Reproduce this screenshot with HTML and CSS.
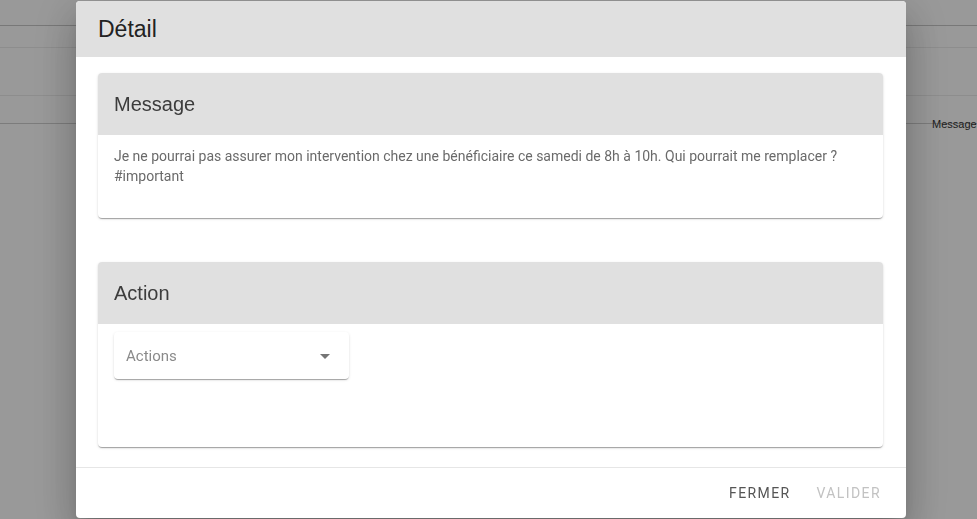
FILE: index.html
```html
<!DOCTYPE html>
<html>
  <head>
    <title>Messages</title>
    <link rel="stylesheet" href="styles.css">
  </head>
  <body>
    <!-- Page behind the dialog -->
    <div class="page">
      <div class="page-bar"></div>
      <div class="page-tabs"></div>
      <div class="page-filters"></div>
      <div class="page-head">
        <span class="page-col">Message</span>
      </div>
    </div>

    <!-- Detail dialog -->
    <div class="backdrop">
      <div class="dialog">
        <div class="dialog-title">Détail</div>
        <div class="dialog-content">
          <div class="card">
            <div class="card-header">Message</div>
            <div class="card-body">
              <p class="message-text">Je ne pourrai pas assurer mon intervention chez une bénéficiaire ce samedi de 8h à 10h. Qui pourrait me remplacer ? #important</p>
            </div>
          </div>

          <div class="card card-action">
            <div class="card-header">Action</div>
            <div class="card-body">
              <div class="select">
                <span class="select-label">Actions</span>
                <svg class="select-icon" viewBox="0 0 24 24" width="24" height="24"><path d="M7 10l5 5 5-5z"></path></svg>
              </div>
            </div>
          </div>
        </div>
        <div class="dialog-actions">
          <button class="btn">Fermer</button>
          <button class="btn" disabled>Valider</button>
        </div>
      </div>
    </div>
  </body>
</html>
```

FILE: styles.css
```css
body {
  margin: 0;
  height: 100vh;
  overflow: hidden;
  font-family: Roboto, "Liberation Sans", Arial, sans-serif;
  background-color: #fff;
}

.page-bar {
  height: 25px;
  border-bottom: 1px solid #c8c8c8;
}

.page-tabs {
  height: 21px;
  border-bottom: 1px solid #ececec;
}

.page-filters {
  height: 47px;
  border-bottom: 1px solid #ececec;
}

.page-head {
  height: 27px;
  border-bottom: 1px solid #cfcfcf;
  display: flex;
  justify-content: flex-end;
  align-items: flex-end;
}

.page-col {
  font-family: "Liberation Sans", Arial, sans-serif;
  font-size: 11px;
  color: #333;
  width: 45px;
  white-space: nowrap;
  overflow: hidden;
  margin-bottom: -7px;
}

.backdrop {
  position: fixed;
  inset: 0;
  background: rgba(0, 0, 0, 0.4);
  display: flex;
  justify-content: center;
  align-items: flex-start;
}

.dialog {
  width: 830px;
  height: 517px;
  margin: 1px 0 0 5px;
  background: #fff;
  border-radius: 4px;
  overflow: hidden;
  display: flex;
  flex-direction: column;
  box-shadow: 0 11px 15px -7px rgba(0, 0, 0, 0.2), 0 24px 38px 3px rgba(0, 0, 0, 0.14), 0 9px 46px 8px rgba(0, 0, 0, 0.12);
}

.dialog-title {
  flex-shrink: 0;
  background: #e0e0e0;
  height: 56px;
  padding: 0 22px;
  display: flex;
  align-items: center;
  font-family: "Liberation Sans", Arial, sans-serif;
  font-size: 23px;
  color: #222;
}

.dialog-content {
  flex: 1;
  padding: 16px 23px 0 22px;
  display: flex;
  flex-direction: column;
  gap: 44px;
}

.card {
  flex-shrink: 0;
  border-radius: 4px;
  background: #fff;
  overflow: hidden;
  box-shadow: 0 2px 1px -1px rgba(0, 0, 0, 0.2), 0 1px 1px 0 rgba(0, 0, 0, 0.14), 0 1px 3px 0 rgba(0, 0, 0, 0.12);
}

.card-header {
  background: #e0e0e0;
  height: 62px;
  padding: 0 16px;
  display: flex;
  align-items: center;
  font-family: "Liberation Sans", Arial, sans-serif;
  font-size: 20px;
  color: #3c3c3c;
}

.card-body {
  height: 83px;
  padding: 0 16px;
  box-sizing: border-box;
}

.card-body:has(.message-text) {
  padding-top: 11px;
}

.message-text {
  margin: 0;
  font-size: 14px;
  line-height: 20px;
  color: #6a6a6a;
  max-width: 740px;
}

.card-action .card-body {
  height: 123px;
  padding-top: 8px;
}

.select {
  width: 235px;
  height: 47px;
  box-sizing: border-box;
  padding: 0 12px;
  border-radius: 4px;
  display: flex;
  align-items: center;
  justify-content: space-between;
  box-shadow: 0 2px 1px -1px rgba(0, 0, 0, 0.2), 0 1px 1px 0 rgba(0, 0, 0, 0.14), 0 1px 3px 0 rgba(0, 0, 0, 0.12);
}

.select-label {
  font-size: 15px;
  color: #8a8a8a;
}

.select-icon {
  fill: #757575;
}

.dialog-actions {
  flex-shrink: 0;
  height: 50px;
  margin-top: auto;
  border-top: 1px solid #e6e6e6;
  display: flex;
  justify-content: flex-end;
  align-items: center;
  gap: 10px;
  padding: 0 17px;
}

.btn {
  background: none;
  border: none;
  padding: 6px 8px;
  font-family: Roboto, "Liberation Sans", Arial, sans-serif;
  font-size: 14px;
  letter-spacing: 1.4px;
  text-transform: uppercase;
  color: #555;
  cursor: pointer;
}

.btn:disabled {
  color: #c2c2c2;
  cursor: default;
}
```
